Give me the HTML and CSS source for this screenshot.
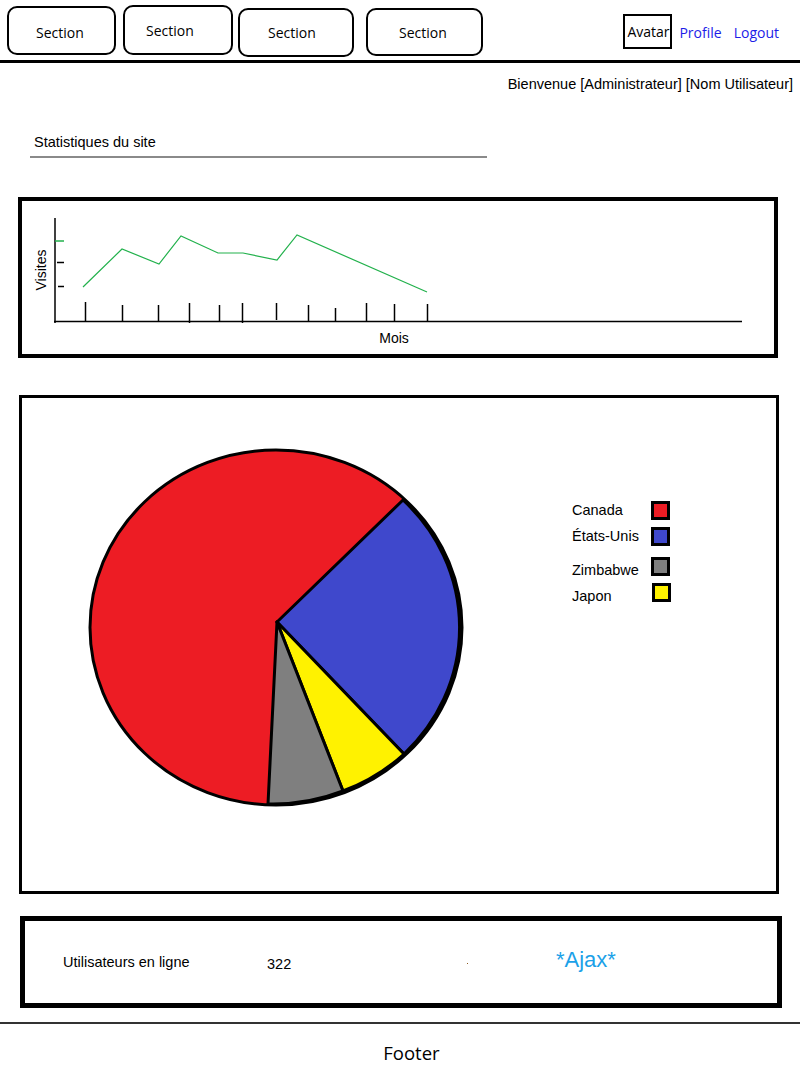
FILE: index.html
```html
<!DOCTYPE html>
<html lang="fr">
<head>
<meta charset="utf-8">
<title>Statistiques du site</title>
<link rel="stylesheet" href="styles.css">
</head>
<body>
<header class="topbar">
  <nav class="sections">
    <a class="section-btn">Section</a>
    <a class="section-btn">Section</a>
    <a class="section-btn">Section</a>
    <a class="section-btn">Section</a>
  </nav>
  <div class="user">
    <div class="avatar">Avatar</div>
    <a class="link">Profile</a>
    <a class="link">Logout</a>
  </div>
</header>

<div class="welcome">Bienvenue [Administrateur] [Nom Utilisateur]</div>

<h1 class="title">Statistiques du site</h1>

<section class="box line-box">
  <svg class="line-chart" width="752" height="153" viewBox="22 201 752 153">
    <line x1="55" y1="218" x2="55" y2="323" class="axis"/>
    <line x1="54" y1="321.5" x2="742" y2="321.5" class="axis"/>
    <line x1="55" y1="241" x2="64" y2="241" class="green-tick"/>
    <line x1="57" y1="262.5" x2="64" y2="262.5" class="axis"/>
    <line x1="58" y1="286.5" x2="64" y2="286.5" class="axis"/>
    <g class="ticks">
      <line x1="85.5" y1="302" x2="85.5" y2="321"/>
      <line x1="122.5" y1="305" x2="122.5" y2="321"/>
      <line x1="158.5" y1="305" x2="158.5" y2="321"/>
      <line x1="189.5" y1="303" x2="189.5" y2="323"/>
      <line x1="219.5" y1="305" x2="219.5" y2="321"/>
      <line x1="242.5" y1="303" x2="242.5" y2="323"/>
      <line x1="276.5" y1="303" x2="276.5" y2="320"/>
      <line x1="308.5" y1="305" x2="308.5" y2="321"/>
      <line x1="335.5" y1="308" x2="335.5" y2="321"/>
      <line x1="366.5" y1="303" x2="366.5" y2="321"/>
      <line x1="394.5" y1="304" x2="394.5" y2="321"/>
      <line x1="427.5" y1="304" x2="427.5" y2="321"/>
    </g>
    <polyline class="visits" points="83,287 122,249 159,264 181,236 218,253 243,253 277,260 297,235 427,292"/>
    <text class="axis-label" x="41" y="270" transform="rotate(-90 41 270)" text-anchor="middle" dominant-baseline="central">Visites</text>
    <text class="axis-label" x="394" y="338" text-anchor="middle" dominant-baseline="central">Mois</text>
  </svg>
</section>

<section class="box pie-box">
  <svg class="pie" width="540" height="493" viewBox="22 398 540 493">
    <ellipse class="red" cx="276" cy="627.5" rx="186" ry="177.5"/>
    <path class="blue" d="M277 622 L403 500 A186 177.5 0 0 1 404 754 Z"/>
    <path class="yellow" d="M277 622 L404 754 A186 177.5 0 0 1 343 791 Z"/>
    <path class="gray" d="M277 622 L343 791 A186 177.5 0 0 1 268 804 Z"/>
    <ellipse class="outline" cx="276" cy="627.5" rx="186" ry="177.5"/>
  </svg>
  <ul class="legend">
    <li class="legend-row"><span>Canada</span><i class="swatch sw-red"></i></li>
    <li class="legend-row"><span>États-Unis</span><i class="swatch sw-blue"></i></li>
    <li class="legend-row"><span>Zimbabwe</span><i class="swatch sw-gray"></i></li>
    <li class="legend-row"><span>Japon</span><i class="swatch sw-yellow"></i></li>
  </ul>
</section>

<section class="box online-box">
  <span class="online-label">Utilisateurs en ligne</span>
  <span class="online-count">322</span>
  <span class="dot"></span>
  <span class="ajax">*Ajax*</span>
</section>

<footer class="footer">Footer</footer>
</body>
</html>
```

FILE: styles.css
```css
* { box-sizing: border-box; }

body {
  margin: 0;
  background: #fff;
  color: #000;
  font-family: "Liberation Sans", Arial, sans-serif;
}

/* header */
.topbar {
  display: flex;
  align-items: flex-start;
  height: 63px;
  border-bottom: 3px solid #000;
}

.sections {
  display: flex;
  align-items: flex-start;
}

.section-btn {
  display: flex;
  align-items: center;
  border: 2px solid #000;
  border-radius: 10px;
  font-family: "Open Sans", "Noto Sans", sans-serif;
  font-size: 14px;
  color: #000;
}

.section-btn:nth-child(1) { margin-left: 7px; margin-top: 6px; width: 109px; height: 49px; padding: 3px 0 0 27px; }
.section-btn:nth-child(2) { margin-left: 7px; margin-top: 5px; width: 110px; height: 50px; padding: 0 0 0 21px; }
.section-btn:nth-child(3) { margin-left: 5px; margin-top: 8px; width: 116px; height: 49px; padding: 0 0 0 28px; }
.section-btn:nth-child(4) { margin-left: 12px; margin-top: 8px; width: 117px; height: 48px; padding: 0 0 0 31px; }

.user {
  margin-left: auto;
  margin-right: 21px;
  margin-top: 14px;
  display: flex;
  align-items: center;
  font-family: "Open Sans", "Noto Sans", sans-serif;
  font-size: 14px;
}

.avatar {
  width: 49px;
  height: 35px;
  border: 2px solid #000;
  display: flex;
  align-items: center;
  justify-content: center;
  padding-left: 1px;
}

.link {
  color: #1c1ce8;
  margin-left: 7px;
  padding-top: 2px;
}

.link + .link { margin-left: 12px; }

/* welcome */
.welcome {
  margin-top: 13px;
  padding-right: 7px;
  text-align: right;
  font-size: 14.5px;
  line-height: 16px;
}

.title {
  margin: 42px 0 0 30px;
  width: 457px;
  padding: 0 0 6px 4px;
  border-bottom: 2px solid #8a8a8a;
  font-size: 14.5px;
  line-height: 16px;
  font-weight: normal;
}

/* boxes */
.box {
  border: 4px solid #000;
  width: 760px;
}

.line-box {
  margin: 39px 0 0 18px;
  height: 161px;
}

.line-chart { display: block; }

.axis { stroke: #000; stroke-width: 1.5; }
.green-tick { stroke: #22b14c; stroke-width: 1.5; }
.ticks line { stroke: #000; stroke-width: 1.5; }
.visits { fill: none; stroke: #22b14c; stroke-width: 1.2; }
.axis-label { font-family: "Liberation Sans", Arial, sans-serif; font-size: 14px; fill: #000; }

.pie-box {
  margin: 37px 0 0 19px;
  height: 499px;
  border-width: 3px;
  display: flex;
  align-items: flex-start;
}

.pie { display: block; flex: none; }
.pie path { stroke: #000; stroke-width: 3; stroke-linejoin: round; }
.pie .outline { fill: none; stroke: #000; stroke-width: 3; }
.red { fill: #ed1c24; }
.blue { fill: #3f48cc; }
.yellow { fill: #fff200; }
.gray { fill: #7f7f7f; }

.legend {
  list-style: none;
  margin: 103px 0 0 10px;
  padding: 0;
  font-size: 14.5px;
}

.legend-row {
  display: grid;
  grid-template-columns: 79px 19px;
  align-items: start;
  height: 26px;
  line-height: 19px;
}

.legend-row:nth-child(3) { margin-top: 4px; }
.legend-row:nth-child(3) span { padding-top: 4px; }
.legend-row:nth-child(4) span { padding-top: 4px; }
.legend-row:nth-child(4) .swatch { margin-left: 1px; }

.swatch {
  display: block;
  width: 19px;
  height: 19px;
  border: 3px solid #000;
}

.sw-red { background: #ed1c24; }
.sw-blue { background: #3f48cc; }
.sw-gray { background: #7f7f7f; }
.sw-yellow { background: #fff200; }

.online-box {
  margin: 22px 0 0 20px;
  width: 762px;
  height: 92px;
  border-width: 5px;
  display: flex;
  align-items: center;
  font-size: 14.5px;
}

.online-label {
  margin-left: 38px;
  width: 204px;
}

.online-count {
  width: 200px;
  padding-top: 4px;
}

.dot {
  width: 1px;
  height: 1px;
  background: #8a5a20;
  margin-top: 2px;
}

.ajax {
  margin-left: 88px;
  font-size: 22px;
  color: #1ba1e8;
  margin-top: -4px;
}

.footer {
  margin-top: 14px;
  border-top: 2px solid #333;
  padding: 16px 0 0 23px;
  text-align: center;
  font-family: "Open Sans", "Noto Sans", sans-serif;
  font-size: 18.5px;
  line-height: 25px;
}
```
